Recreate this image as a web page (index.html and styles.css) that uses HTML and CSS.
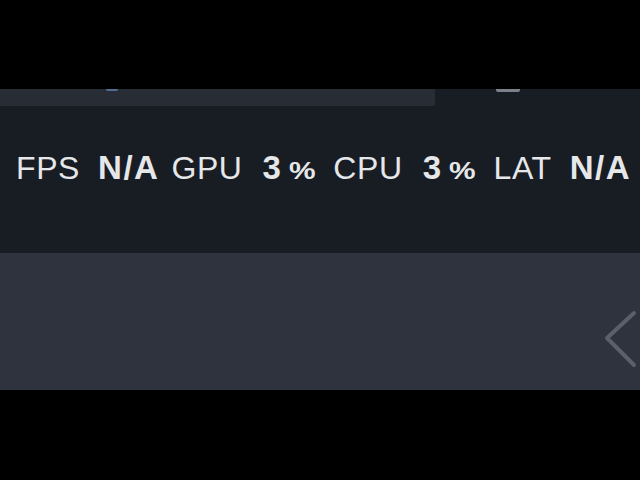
FILE: index.html
```html
<!DOCTYPE html>
<html>
<head>
<meta charset="utf-8">
<link rel="stylesheet" href="styles.css">
</head>
<body>
<div class="screen">
  <div class="top-black"></div>
  <div class="strip">
    <div class="strip-left"><span class="blue-glint"></span></div>
    <div class="strip-right"><span class="grey-glint"></span></div>
  </div>
  <div class="perf">
    <div class="stats">
      <span class="label">FPS</span><span class="value">N/A</span>
      <span class="label">GPU</span><span class="value num">3<span class="pct">%</span></span>
      <span class="label">CPU</span><span class="value num">3<span class="pct">%</span></span>
      <span class="label">LAT</span><span class="value">N/A</span>
    </div>
  </div>
  <div class="lower">
    <svg class="chevron" width="36" height="60" viewBox="0 0 36 60">
      <polyline points="30,3 3,28 30,55" fill="none" stroke="#5a606a" stroke-width="4" stroke-linecap="round" stroke-linejoin="round"/>
    </svg>
  </div>
  <div class="bottom-black"></div>
</div>
</body>
</html>
```

FILE: styles.css
```css
html, body {
  margin: 0;
  padding: 0;
  background: #000;
}
.screen {
  width: 640px;
  height: 480px;
  display: flex;
  flex-direction: column;
  overflow: hidden;
  font-family: "Liberation Sans", Arial, sans-serif;
}
.top-black {
  height: 89px;
  background: #000;
}
.strip {
  height: 17px;
  display: flex;
  background: #181c23;
}
.strip-left {
  width: 435px;
  background: #282c35;
  border-bottom-right-radius: 2px;
  position: relative;
}
.strip-right {
  flex: 1;
  position: relative;
}
.blue-glint {
  position: absolute;
  left: 106px;
  top: 0;
  width: 12px;
  height: 2px;
  border-radius: 0 0 6px 6px;
  background: #5a7fa8;
  opacity: 0.8;
}
.grey-glint {
  position: absolute;
  left: 61px;
  top: 0;
  width: 24px;
  height: 3px;
  border-radius: 0 0 2px 2px;
  background: #7c8088;
}
.perf {
  height: 147px;
  background: #181c23;
  display: flex;
  align-items: flex-start;
}
.stats {
  display: flex;
  align-items: baseline;
  padding: 42px 0 0 16px;
  color: #e6e7e9;
  font-size: 32px;
  line-height: 40px;
  white-space: nowrap;
}
.label {
  font-weight: 400;
  margin-right: 18px;
  letter-spacing: 0.6px;
}
.value {
  font-weight: 700;
  font-size: 33px;
  margin-right: 12px;
  letter-spacing: 1.5px;
}
.value.num {
  margin-left: 2px;
  margin-right: 18px;
  letter-spacing: 0;
}
.pct {
  display: inline-block;
  font-size: 23px;
  margin-left: 8px;
  margin-right: 6px;
  transform: scaleX(1.3);
  transform-origin: left bottom;
}
.lower {
  height: 137px;
  background: #2e333d;
  display: flex;
  justify-content: flex-end;
  align-items: flex-start;
}
.chevron {
  margin-top: 57px;
  margin-right: 0;
}
.bottom-black {
  flex: 1;
  background: #000;
}
```
